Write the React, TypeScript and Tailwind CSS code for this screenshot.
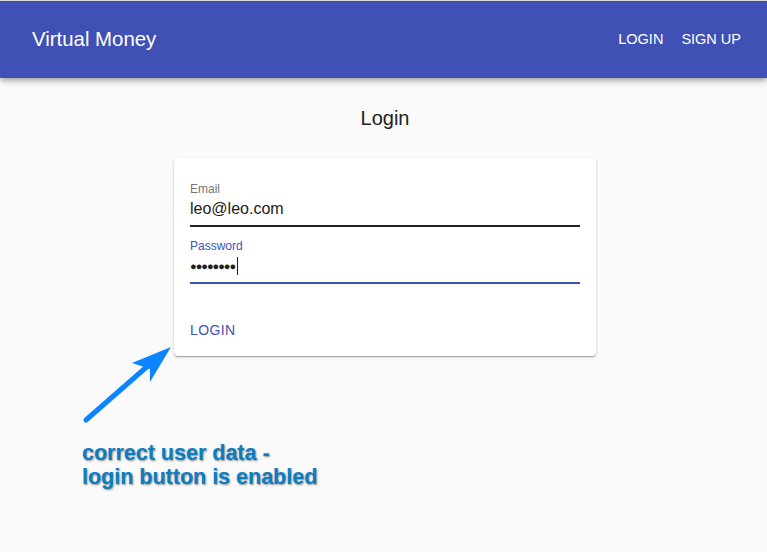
import React from "react";

// Login screen with the annotation overlay (arrow + note) drawn on top.
export default function App() {
  return (
    <div className="relative h-[552px] w-[767px] overflow-hidden bg-[#fafafa] font-['Liberation_Sans',Arial,sans-serif]">
      <header className="relative z-10 flex h-[78px] items-center justify-between border-t border-[#d9d9d9] bg-[#3f51b5] pl-8 pr-[26px] text-white shadow-[0_2px_4px_-1px_rgba(0,0,0,0.2),0_4px_5px_0_rgba(0,0,0,0.14),0_1px_10px_0_rgba(0,0,0,0.12)]">
        <h1 className="text-[20.4px] leading-none">Virtual Money</h1>
        <nav className="flex gap-[18px] text-[14.5px] uppercase leading-none">
          <span>Login</span>
          <span>Sign up</span>
        </nav>
      </header>

      <main className="flex flex-col items-center pl-[3px]">
        <h2 className="mt-[28px] text-[20px] leading-6 text-[#212121]">Login</h2>
        <div className="mt-[28px] w-[422px] rounded bg-white px-4 pb-2 pt-[23px] shadow-[0_1px_3px_0_rgba(0,0,0,0.2),0_1px_1px_0_rgba(0,0,0,0.14),0_2px_1px_-1px_rgba(0,0,0,0.12)]">
          <label className="block text-[12px] leading-4 text-[#757575]">Email</label>
          <div className="mt-[1px] border-b-2 border-[#212121] pb-[5px] text-[16px] leading-[22px] text-[#212121]">
            leo@leo.com
          </div>
          <label className="mt-[11px] block text-[12px] leading-4 text-[#3f51b5]">Password</label>
          <div className="mt-[1px] flex items-center border-b-2 border-[#3f51b5] pb-[5px] text-[16px] leading-[22px] text-[#212121]">
            <span className="text-[11px] tracking-[-1px]">●●●●●●●●</span>
            <span className="ml-[2px] h-[18px] w-px bg-[#212121]" />
          </div>
          <button className="mt-[28px] flex h-9 items-center text-[14px] uppercase tracking-[0.4px] text-[#3f51b5]">
            Login
          </button>
        </div>
      </main>

      <svg className="absolute left-0 top-0" width="767" height="552" viewBox="0 0 767 552">
        <line x1="86" y1="420" x2="150" y2="364" stroke="#0a84ff" strokeWidth="5" strokeLinecap="round" />
        <polygon points="171,347 132,363 150,369 150,382" fill="#0a84ff" />
      </svg>

      <div className="absolute left-[82px] top-[441px] text-[21.5px] font-bold leading-6 text-[#0a7ec4] [text-shadow:1px_1px_2px_rgba(0,0,0,0.45)]">
        <div>correct user data -</div>
        <div>login button is enabled</div>
      </div>
    </div>
  );
}
